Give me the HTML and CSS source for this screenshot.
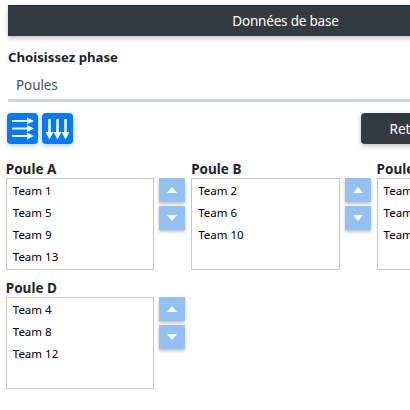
FILE: index.html
```html
<!DOCTYPE html>
<html lang="fr">
<head>
<meta charset="utf-8">
<title>Données de base</title>
<link rel="stylesheet" href="styles.css">
</head>
<body>
<div class="page">
  <div class="header">Données de base</div>
  <div class="phase">
    <div class="phase-label">Choisissez phase</div>
    <div class="phase-select">Poules</div>
  </div>
  <div class="toolbar">
    <button class="tool" aria-label="Lignes">
      <svg width="31" height="31" viewBox="0 0 31 31"><g stroke="#fff" stroke-width="2" fill="#fff"><path d="M5 8H22M5 15.500H22M5 23H22"/><path stroke="none" d="M20 4.500l7 3.500-7 3.500zM20 12l7 3.500-7 3.500zM20 19.500l7 3.500-7 3.500z"/></g></svg>
    </button>
    <button class="tool" aria-label="Colonnes">
      <svg width="31" height="31" viewBox="0 0 31 31"><g stroke="#fff" stroke-width="2.500" fill="#fff"><path d="M7.500 6V21M15.500 6V21M23.500 6V21"/><path stroke="none" d="M3.500 19h8l-4 7.500zM11.500 19h8l-4 7.500zM19.500 19h8l-4 7.500z"/></g></svg>
    </button>
    <button class="back">Retour</button>
  </div>
  <div class="groups">
    <section class="group">
      <h3 class="group-title">Poule A</h3>
      <div class="group-body">
        <ul class="list"><li>Team 1</li><li>Team 5</li><li>Team 9</li><li>Team 13</li></ul>
        <div class="moves">
          <button class="move"><span class="up"></span></button>
          <button class="move"><span class="down"></span></button>
        </div>
      </div>
    </section>
    <section class="group">
      <h3 class="group-title">Poule B</h3>
      <div class="group-body">
        <ul class="list"><li>Team 2</li><li>Team 6</li><li>Team 10</li></ul>
        <div class="moves">
          <button class="move"><span class="up"></span></button>
          <button class="move"><span class="down"></span></button>
        </div>
      </div>
    </section>
    <section class="group">
      <h3 class="group-title">Poule C</h3>
      <div class="group-body">
        <ul class="list"><li>Team 3</li><li>Team 7</li><li>Team 11</li></ul>
        <div class="moves">
          <button class="move"><span class="up"></span></button>
          <button class="move"><span class="down"></span></button>
        </div>
      </div>
    </section>
    <section class="group">
      <h3 class="group-title">Poule D</h3>
      <div class="group-body">
        <ul class="list"><li>Team 4</li><li>Team 8</li><li>Team 12</li></ul>
        <div class="moves">
          <button class="move"><span class="up"></span></button>
          <button class="move"><span class="down"></span></button>
        </div>
      </div>
    </section>
  </div>
</div>
</body>
</html>
```
FILE: styles.css
```css
html, body {
  margin: 0;
  padding: 0;
  width: 410px;
  height: 410px;
  overflow: hidden;
  background: #fff;
}
.page {
  width: 564px;
  padding-top: 5px;
  font-family: "Noto Sans", "Open Sans", sans-serif;
  color: #212529;
}
.header {
  margin-left: 8px;
  width: 555px;
  height: 31px;
  box-sizing: border-box;
  background: #343a40;
  border-top: 1px solid #23272b;
  color: #fff;
  font-size: 13.500px;
  letter-spacing: -.2px;
  line-height: 30px;
  text-align: center;
  box-shadow: 0 2px 5px rgba(0,0,0,.26);
}
.phase {
  margin-left: 8px;
  padding-top: 12px;
}
.phase-label {
  font-size: 13.200px;
  font-weight: 700;
  line-height: 18px;
}
.phase-select {
  height: 26px;
  margin-top: 7px;
  padding-left: 8px;
  border-bottom: 3px solid #ced4da;
  color: #495057;
  font-size: 13.500px;
  letter-spacing: -.1px;
  line-height: 25px;
}
.toolbar {
  display: flex;
  gap: 4px;
  margin: 11px 0 0 7px;
  width: 555px;
}
.tool {
  width: 31px;
  height: 31px;
  padding: 0;
  border: 0;
  border-radius: 4px;
  background: #007bff;
  box-shadow: 0 2px 5px rgba(0,0,0,.2);
}
.tool svg { display: block; }
.back {
  width: 100px;
  height: 31px;
  margin-left: 284px;
  padding: 0;
  border: 0;
  border-radius: 4px;
  background: #343a40;
  color: #fff;
  font-family: inherit;
  font-size: 13.500px;
  box-shadow: 0 2px 5px rgba(0,0,0,.26);
}
.groups {
  display: flex;
  flex-wrap: wrap;
  row-gap: 9px;
  margin: 16px 0 0 5.800px;
  width: 558px;
}
.group {
  width: 185.400px;
}
.group-title {
  margin: 0;
  font-size: 13.500px;
  font-weight: 700;
  line-height: 18px;
  color: #212529;
}
.group-body {
  display: flex;
  gap: 5px;
}
.list {
  width: 148.500px;
  height: 92px;
  box-sizing: border-box;
  margin: 0;
  padding: 1px 0 0 6px;
  list-style: none;
  border: 1px solid #c8c8c8;
  color: #000;
  font-size: 11.500px;
}
.list li {
  height: 22px;
  line-height: 21px;
}
.moves {
  display: flex;
  flex-direction: column;
  gap: 4px;
}
.move {
  display: flex;
  align-items: center;
  justify-content: center;
  width: 26px;
  height: 24px;
  padding: 0;
  border: 0;
  background: #93c1f3;
  box-shadow: 0 2px 3px rgba(0,0,0,.25);
}
.up, .down {
  width: 0;
  height: 0;
  border-left: 5px solid transparent;
  border-right: 5px solid transparent;
}
.up { border-bottom: 6px solid #fff; }
.down { border-top: 6px solid #fff; }
```
